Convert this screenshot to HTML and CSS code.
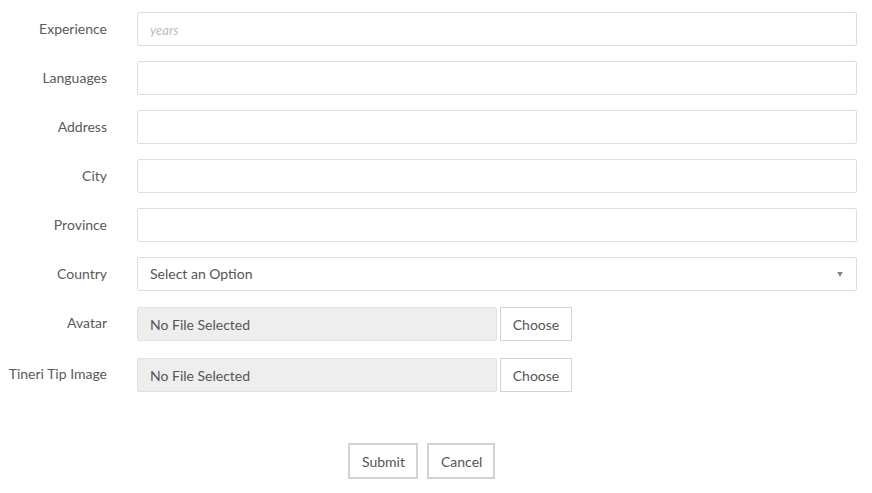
FILE: index.html
```html
<!DOCTYPE html>
<html>
<head>
<meta charset="utf-8">
<link rel="stylesheet" href="styles.css">
</head>
<body>
<form class="form">
  <div class="row">
    <label class="lbl">Experience</label>
    <div class="field"><input class="input" type="text" placeholder="years"></div>
  </div>
  <div class="row">
    <label class="lbl">Languages</label>
    <div class="field"><input class="input" type="text"></div>
  </div>
  <div class="row">
    <label class="lbl">Address</label>
    <div class="field"><input class="input" type="text"></div>
  </div>
  <div class="row">
    <label class="lbl">City</label>
    <div class="field"><input class="input" type="text"></div>
  </div>
  <div class="row">
    <label class="lbl">Province</label>
    <div class="field"><input class="input" type="text"></div>
  </div>
  <div class="row row-select">
    <label class="lbl">Country</label>
    <div class="field">
      <div class="select">Select an Option<span class="caret"></span></div>
    </div>
  </div>
  <div class="row file-row">
    <label class="lbl lbl-up">Avatar</label>
    <div class="file">
      <div class="file-name">No File Selected</div>
      <button type="button" class="choose">Choose</button>
    </div>
  </div>
  <div class="row file-row">
    <label class="lbl lbl-up">Tineri Tip Image</label>
    <div class="file">
      <div class="file-name">No File Selected</div>
      <button type="button" class="choose">Choose</button>
    </div>
  </div>
  <div class="actions">
    <button type="button" class="btn">Submit</button>
    <button type="button" class="btn">Cancel</button>
  </div>
</form>
</body>
</html>
```

FILE: styles.css
```css
html, body {
  margin: 0;
  padding: 0;
  background: #ffffff;
  font-family: Lato, "Open Sans", sans-serif;
  font-size: 14px;
  color: #555555;
}
.form {
  padding: 12px 15px 0 0;
  width: 857px;
}
.row {
  display: flex;
  align-items: center;
  height: 34px;
  margin-bottom: 15px;
}
.row.row-select {
  margin-bottom: 16px;
}
.row.file-row {
  margin-bottom: 17px;
}
.lbl {
  width: 107px;
  flex: none;
  text-align: right;
  margin-right: 30px;
  color: #5a5a5a;
  line-height: 20px;
}
.lbl-up {
  position: relative;
  top: -1px;
}
.field {
  flex: 1;
  height: 34px;
}
.input {
  box-sizing: border-box;
  width: 100%;
  height: 34px;
  border: 1px solid #dcdfe2;
  border-radius: 2px;
  padding: 0 12px;
  font-family: inherit;
  font-size: 14px;
  color: #555;
  outline: none;
  background: #fff;
}
.input::placeholder {
  color: #bcbcbc;
  font-style: italic;
  font-size: 13px;
}
.select {
  box-sizing: border-box;
  height: 34px;
  border: 1px solid #dcdfe2;
  border-radius: 2px;
  padding: 0 12px 1px;
  display: flex;
  align-items: center;
  justify-content: space-between;
  color: #555;
}
.caret {
  width: 0;
  height: 0;
  border-left: 3.5px solid transparent;
  border-right: 3.5px solid transparent;
  border-top: 5px solid #888;
  margin-right: 1px;
  margin-top: 2px;
}
.file {
  display: flex;
  align-items: stretch;
  gap: 3px;
  height: 34px;
}
.file-name {
  box-sizing: border-box;
  width: 360px;
  height: 34px;
  background: #eeeeee;
  border: 1px solid #dfe1e3;
  border-radius: 2px;
  padding: 0 12px;
  display: flex;
  align-items: center;
  color: #555;
}
.choose {
  box-sizing: border-box;
  width: 72px;
  height: 34px;
  background: #fff;
  border: 1px solid #cfd4d8;
  border-radius: 0;
  font-family: inherit;
  font-size: 14px;
  color: #555;
  padding: 0;
}
.actions {
  display: flex;
  justify-content: center;
  gap: 9px;
  margin-top: 51px;
  padding-right: 14px;
}
.btn {
  box-sizing: border-box;
  height: 36px;
  padding: 0 12px;
  background: #fff;
  border: 2px solid #cfd4d8;
  border-radius: 0;
  font-family: inherit;
  font-size: 14px;
  color: #555;
}
.btn:first-child { width: 70px; }
.btn:last-child { width: 68px; }
```
